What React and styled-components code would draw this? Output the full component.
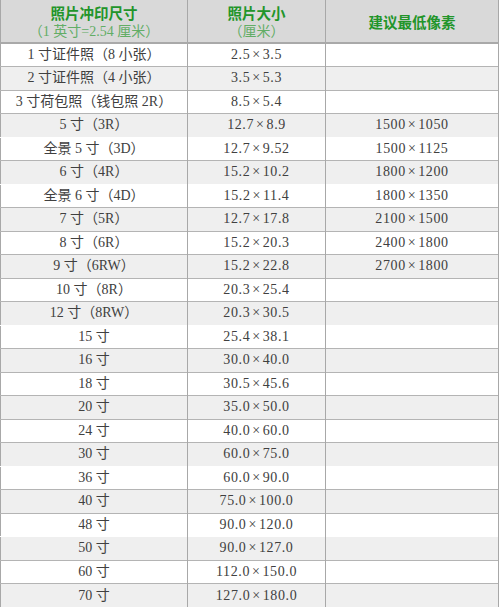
import React from 'react';
import styled, { createGlobalStyle } from 'styled-components';

const GlobalStyle = createGlobalStyle`
  html, body {
    margin: 0;
    padding: 0;
    background: #ffffff;
  }
`;

const FONT = `"Liberation Serif", "Noto Sans CJK SC", serif`;

const Table = styled.table`
  width: 498px;
  border-collapse: collapse;
  table-layout: fixed;
  font-family: ${FONT};
  font-size: 14px;
  color: #404040;
  border-left: 1px solid #a8a8a8;
  border-right: 1px solid #a8a8a8;
`;

const HeadRow = styled.tr`
  height: 43px;
  background: #d9d9d9;
  border-bottom: 2px solid #a9a9a9;
`;

const HeadCell = styled.th`
  padding: 4px 0 0;
  text-align: center;
  vertical-align: middle;
  border-right: 1px solid #a8a8a8;
  font-weight: normal;
  line-height: 17px;
`;

const HeadTitle = styled.div`
  color: #22952a;
  font-weight: bold;
  font-size: 14.5px;
`;

const HeadNote = styled.div`
  color: #62ad66;
  font-size: 14px;
`;

const Row = styled.tr`
  height: 23.5px;
  background: ${props => (props.$striped ? '#efefef' : '#ffffff')};
  border-top: 1px solid ${props => (props.$noTop ? 'transparent' : '#b4b4b4')};
`;

const Cell = styled.td`
  padding: 0;
  text-align: center;
  vertical-align: middle;
  white-space: nowrap;
  border-right: 1px solid #a8a8a8;
  line-height: 20px;
  letter-spacing: ${props => (props.$numeric ? '0.6px' : '0')};
`;

const Cross = styled.span`
  margin: 0 2px;
`;

const rows = [
  ['1 寸证件照（8 小张）', '2.5×3.5', ''],
  ['2 寸证件照（4 小张）', '3.5×5.3', ''],
  ['3 寸荷包照（钱包照 2R）', '8.5×5.4', ''],
  ['5 寸（3R）', '12.7×8.9', '1500×1050'],
  ['全景 5 寸（3D）', '12.7×9.52', '1500×1125', true],
  ['6 寸（4R）', '15.2×10.2', '1800×1200'],
  ['全景 6 寸（4D）', '15.2×11.4', '1800×1350', true],
  ['7 寸（5R）', '12.7×17.8', '2100×1500'],
  ['8 寸（6R）', '15.2×20.3', '2400×1800'],
  ['9 寸（6RW）', '15.2×22.8', '2700×1800'],
  ['10 寸（8R）', '20.3×25.4', ''],
  ['12 寸（8RW）', '20.3×30.5', ''],
  ['15 寸', '25.4×38.1', '', true],
  ['16 寸', '30.0×40.0', ''],
  ['18 寸', '30.5×45.6', ''],
  ['20 寸', '35.0×50.0', ''],
  ['24 寸', '40.0×60.0', ''],
  ['30 寸', '60.0×75.0', ''],
  ['36 寸', '60.0×90.0', '', true],
  ['40 寸', '75.0×100.0', ''],
  ['48 寸', '90.0×120.0', ''],
  ['50 寸', '90.0×127.0', '', true],
  ['60 寸', '112.0×150.0', ''],
  ['70 寸', '127.0×180.0', ''],
];

function Size({ value }) {
  if (!value) return null;
  const [a, b] = value.split('×');
  return (
    <>
      {a}
      <Cross>×</Cross>
      {b}
    </>
  );
}

export default function App() {
  return (
    <>
      <GlobalStyle />
      <Table>
        <colgroup>
          <col style={{ width: 187 }} />
          <col style={{ width: 138 }} />
          <col style={{ width: 173 }} />
        </colgroup>
        <thead>
          <HeadRow>
            <HeadCell>
              <HeadTitle>照片冲印尺寸</HeadTitle>
              <HeadNote>（1 英寸=2.54 厘米）</HeadNote>
            </HeadCell>
            <HeadCell>
              <HeadTitle>照片大小</HeadTitle>
              <HeadNote>（厘米）</HeadNote>
            </HeadCell>
            <HeadCell>
              <HeadTitle>建议最低像素</HeadTitle>
            </HeadCell>
          </HeadRow>
        </thead>
        <tbody>
          {rows.map(([name, size, px, noTop], i) => (
            <Row key={name} $striped={i % 2 === 1} $noTop={noTop}>
              <Cell>{name}</Cell>
              <Cell $numeric>
                <Size value={size} />
              </Cell>
              <Cell $numeric>
                <Size value={px} />
              </Cell>
            </Row>
          ))}
        </tbody>
      </Table>
    </>
  );
}
